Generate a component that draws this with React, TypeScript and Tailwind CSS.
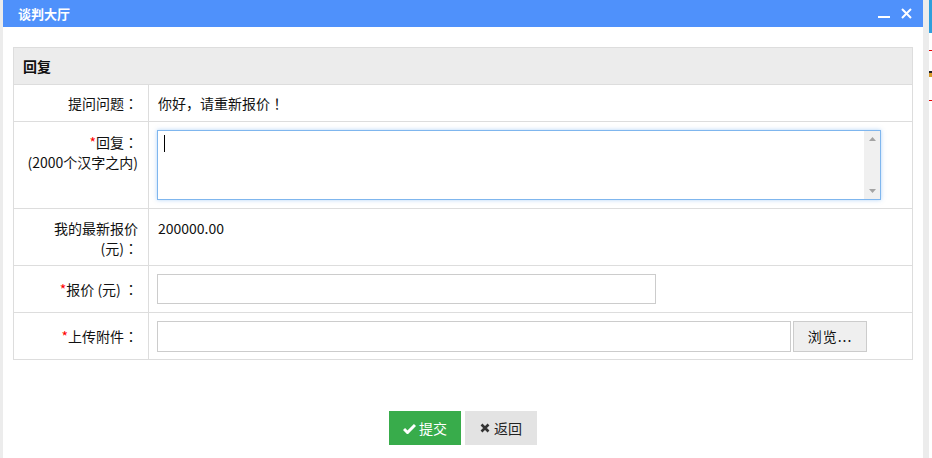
import React from "react";

const font = { fontFamily: '"Noto Sans CJK SC", "Noto Sans", sans-serif' };

function Req() {
  return <span className="text-[#ff0000]">*</span>;
}

// centred full-width punctuation (TC puts the glyph in the middle of the box)
function P({ children }: { children: React.ReactNode }) {
  return <span className="font-['Noto_Sans_CJK_TC',sans-serif]">{children}</span>;
}

export default function App() {
  return (
    <div className="flex h-[458px] w-[932px] overflow-hidden bg-[#ececec] text-[14px] text-[#111]" style={font}>
      <div className="w-[3px] shrink-0" />
      <div className="flex w-[920px] shrink-0 flex-col bg-white">
        <div className="flex h-[27px] items-center justify-between bg-[#4f91fb] pl-[15px] pr-[11px] text-white">
          <span className="text-[13px] font-bold">谈判大厅</span>
          <div className="flex items-center gap-[11px]">
            <svg width="12" height="12" viewBox="0 0 12 12">
              <rect x="0" y="8" width="12" height="2" fill="#fff" />
            </svg>
            <svg width="11" height="11" viewBox="0 0 11 11">
              <path d="M1 1L10 10M10 1L1 10" stroke="#fff" strokeWidth="2" />
            </svg>
          </div>
        </div>

        <div className="px-[10px] pt-[20px]">
          <table className="w-full border-collapse border border-[#dddddd]">
            <tbody>
              <tr className="h-[37px] bg-[#ececec]">
                <td colSpan={2} className="border border-[#dddddd] px-[9px] text-[14px] font-bold">回复</td>
              </tr>
              <tr>
                <td className="w-[135px] border border-[#dddddd] pr-[10px] pt-[8px] pb-[8px] text-right align-top leading-[20px]">提问问题<P>：</P></td>
                <td className="border border-[#dddddd] pl-[9px] pt-[8px] pb-[8px] align-top leading-[20px]">你好，请重新报价<P>！</P></td>
              </tr>
              <tr>
                <td className="border border-[#dddddd] pr-[10px] pt-[10px] text-right align-top leading-[20px]">
                  <Req />回复<P>：</P><br />(2000个汉字之内)
                </td>
                <td className="border border-[#dddddd] pl-[8px] pt-[8px] pb-[8px] align-top">
                  <div className="flex h-[70px] w-[724px] border border-[#7fb6ee] bg-white shadow-[0_0_4px_rgba(100,170,240,0.5)]">
                    <div className="flex-1 pl-[6px] pt-[4px]">
                      <div className="h-[17px] w-px bg-black" />
                    </div>
                    <div className="flex w-[16px] flex-col items-center justify-between bg-[#f0f0f0] py-[6px]">
                      <svg width="7" height="4" viewBox="0 0 7 4"><path d="M3.5 0L7 4H0Z" fill="#a3a3a3" /></svg>
                      <svg width="7" height="4" viewBox="0 0 7 4"><path d="M0 0H7L3.5 4Z" fill="#a3a3a3" /></svg>
                    </div>
                  </div>
                </td>
              </tr>
              <tr>
                <td className="border border-[#dddddd] pr-[10px] pt-[9px] pb-[7px] text-right align-top leading-[20px]">
                  我的最新报价<br />(元)<P>：</P>
                </td>
                <td className="border border-[#dddddd] pl-[9px] pt-[9px] align-top leading-[20px]">200000.00</td>
              </tr>
              <tr className="h-[47px]">
                <td className="border border-[#dddddd] pr-[10px] text-right align-middle leading-[20px]">
                  <Req />报价 (元) <P>：</P>
                </td>
                <td className="border border-[#dddddd] pl-[8px] align-middle">
                  <div className="h-[30px] w-[499px] border border-[#cccccc] bg-white" />
                </td>
              </tr>
              <tr className="h-[47px]">
                <td className="border border-[#dddddd] pr-[10px] text-right align-middle leading-[20px]">
                  <Req />上传附件<P>：</P>
                </td>
                <td className="border border-[#dddddd] pl-[8px] align-middle">
                  <div className="flex items-center gap-[2px]">
                    <div className="h-[31px] w-[634px] border border-[#cccccc] bg-white" />
                    <div className="flex h-[31px] w-[74px] items-center justify-center border border-[#cccccc] bg-[#efefef] text-[14px] tracking-[1px]">
                      浏览...
                    </div>
                  </div>
                </td>
              </tr>
            </tbody>
          </table>
        </div>

        <div className="mt-[51px] flex justify-center gap-[4px]">
          <div className="flex h-[34px] w-[72px] items-center justify-center gap-[3px] bg-[#38ac4b] text-white">
            <svg width="13" height="11" viewBox="0 0 13 11">
              <path d="M1 6L4.5 9.5L12 2" stroke="#fff" strokeWidth="3" fill="none" />
            </svg>
            <span>提交</span>
          </div>
          <div className="flex h-[34px] w-[72px] items-center justify-center gap-[4px] bg-[#e3e3e3] text-[#222]">
            <svg width="10" height="10" viewBox="0 0 10 10">
              <path d="M1.5 1.5L8.5 8.5M8.5 1.5L1.5 8.5" stroke="#333" strokeWidth="2.6" />
            </svg>
            <span>返回</span>
          </div>
        </div>
      </div>
      <div className="w-[6px] shrink-0" />
      <div className="flex w-[3px] shrink-0 flex-col bg-white">
        <div className="h-[33px] bg-[#2f9fdc]" />
        <div className="mt-[17px] h-px bg-[#e00000]" />
        <div className="mt-[20px] h-[2px] bg-[#222]" />
        <div className="h-[4px] bg-[#d89a2a]" />
        <div className="mt-[23px] h-px bg-[#e00000]" />
      </div>
    </div>
  );
}
